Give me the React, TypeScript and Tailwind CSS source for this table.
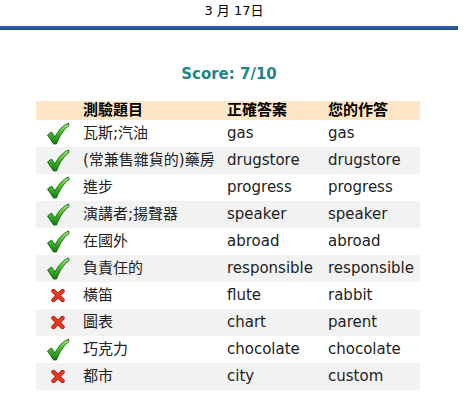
import { Fragment } from "react"

interface Row {
  ok: boolean
  word: string
  answer: string
  yours: string
}

const rows: Row[] = [
  { ok: true, word: "瓦斯;汽油", answer: "gas", yours: "gas" },
  { ok: true, word: "(常兼售雜貨的)藥房", answer: "drugstore", yours: "drugstore" },
  { ok: true, word: "進步", answer: "progress", yours: "progress" },
  { ok: true, word: "演講者;揚聲器", answer: "speaker", yours: "speaker" },
  { ok: true, word: "在國外", answer: "abroad", yours: "abroad" },
  { ok: true, word: "負責任的", answer: "responsible", yours: "responsible" },
  { ok: false, word: "橫笛", answer: "flute", yours: "rabbit" },
  { ok: false, word: "圖表", answer: "chart", yours: "parent" },
  { ok: true, word: "巧克力", answer: "chocolate", yours: "chocolate" },
  { ok: false, word: "都市", answer: "city", yours: "custom" },
]

function Check() {
  return (
    <svg width="24" height="23" viewBox="0 0 24 23">
      <defs>
        <linearGradient id="chk" x1="0" y1="0" x2="0" y2="1">
          <stop offset="0" stopColor="#a6ec7a" />
          <stop offset="0.45" stopColor="#4cbf2c" />
          <stop offset="1" stopColor="#137a12" />
        </linearGradient>
      </defs>
      <path
        d="M1.5 13 L5.5 10 L9 15 C12 9 16.5 3.5 22.5 1 L23 3.5 C17.5 7.5 13.5 14 10.5 22 L7.5 22 Z"
        fill="url(#chk)"
        stroke="#0e6410"
        strokeWidth="0.9"
        strokeLinejoin="round"
      />
    </svg>
  )
}

function Cross() {
  return (
    <svg width="14" height="13" viewBox="0 0 14 13">
      <path d="M2.5 2 L11.5 11 M11.5 2 L2.5 11" stroke="#a8180c" strokeWidth="4.4" strokeLinecap="round" />
      <path d="M2.5 2 L11.5 11 M11.5 2 L2.5 11" stroke="#ec3a22" strokeWidth="2.8" strokeLinecap="round" />
    </svg>
  )
}

export default function App() {
  return (
    <div className="w-[468px] h-[406px] bg-white text-[#222] font-['DejaVu_Sans','Noto_Sans_CJK_TC',sans-serif]">
      {/* date */}
      <div className="h-[26px] w-[468px] pt-[1px] text-center text-[13px] leading-[20px] text-black">
        3 月 17日
      </div>
      <div className="h-[4px] w-[458px] bg-gradient-to-b from-[#2e62a6] to-[#1d4c8c]" />

      {/* score */}
      <div className="mt-[35px] mb-[18px] w-[458px] text-center text-[15px] leading-[18px] font-bold text-[#1f8686]">
        Score: 7/10
      </div>

      {/* results */}
      <div className="ml-[36px] grid w-[384px] grid-cols-[47px_144px_101px_92px] text-[15px]">
        <div className="h-[19px] bg-[#fde6c6]" />
        <div className="flex h-[19px] items-center bg-[#fde6c6] font-bold text-black">測驗題目</div>
        <div className="flex h-[19px] items-center bg-[#fde6c6] font-bold text-black">正確答案</div>
        <div className="flex h-[19px] items-center bg-[#fde6c6] font-bold text-black">您的作答</div>
        {rows.map((r, i) => {
          const bg = i % 2 === 1 ? "bg-[#f2f2f2]" : "bg-white"
          return (
            <Fragment key={i}>
              <div className={`flex h-[27px] items-center justify-center pr-[3px] ${bg}`}>
                {r.ok ? <Check /> : <Cross />}
              </div>
              <div className={`flex h-[27px] items-center whitespace-nowrap ${bg}`}>{r.word}</div>
              <div className={`flex h-[27px] items-center ${bg}`}>{r.answer}</div>
              <div className={`flex h-[27px] items-center ${bg}`}>{r.yours}</div>
            </Fragment>
          )
        })}
      </div>
    </div>
  )
}
